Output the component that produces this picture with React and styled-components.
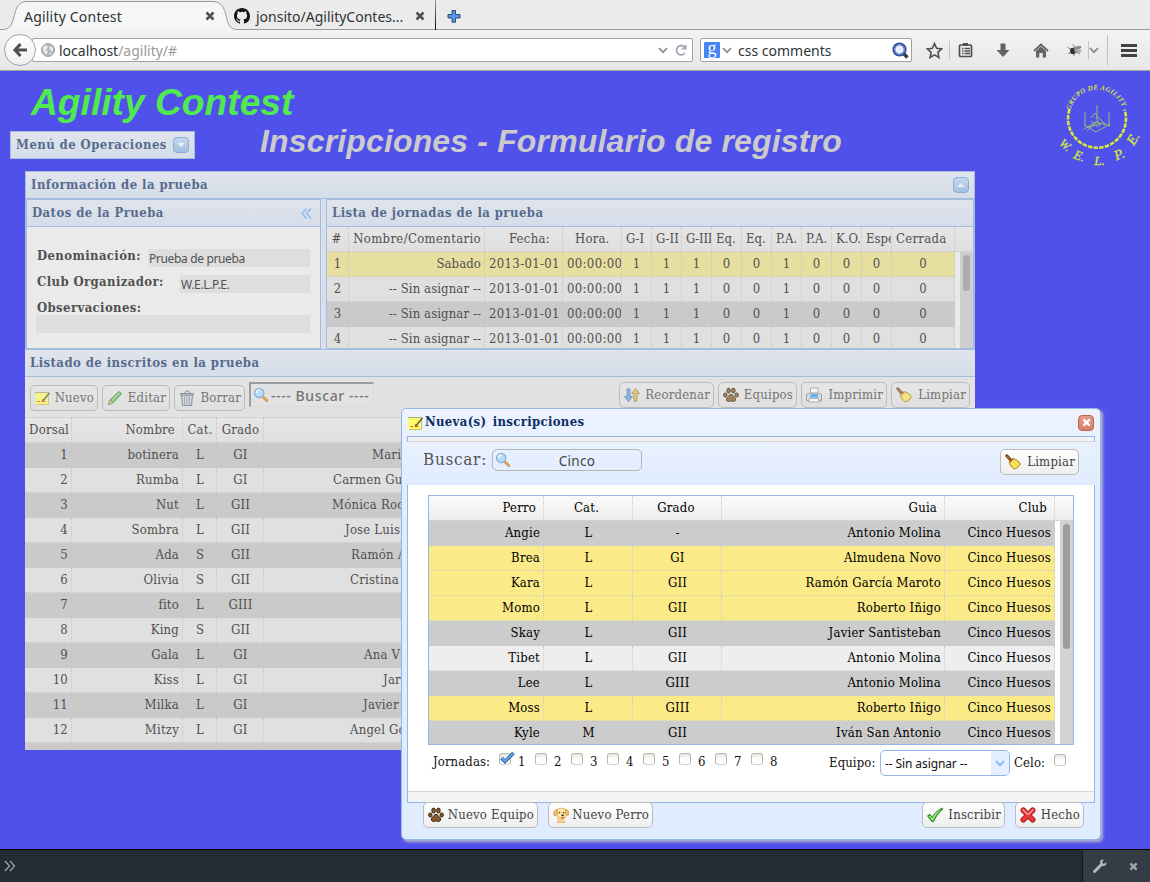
import React from 'react';
import styled, { createGlobalStyle, css } from 'styled-components';

const serif = '"DejaVu Serif Condensed", "DejaVu Serif", serif';
const sans = '"Noto Sans", "Open Sans", sans-serif';

const Global = createGlobalStyle`
  *, *::before, *::after { box-sizing: border-box; }
  body { margin: 0; background: #5050ea; overflow: hidden; }
  svg { display: block; flex: none; }
`;

/* ---------- icons ---------- */

const Icon = ({ size = 16, children, ...rest }) => (
  <svg width={size} height={size} viewBox="0 0 16 16" fill="none" {...rest}>{children}</svg>
);

const NoteIcon = () => (
  <Icon>
    <path d="M0.500 3h12v11H0.500z" fill="#fdfb62" />
    <path d="M0.500 2.500h13" stroke="#6d6420" strokeDasharray="1 1" />
    <path d="M1 14.500h12.500V5" stroke="#c9c45a" />
    <path d="M2.500 11.500h2.500M6.500 11.500h4" stroke="#e0532c" />
    <path d="M7 10l1.500 .3L14.500 3" stroke="#5c5540" strokeWidth="1.500" />
  </Icon>
);
const PencilIcon = () => (
  <Icon>
    <path d="M1.500 14.500l1.200-4.200L12 1.500l2.500 2.200-8.500 9z" fill="#55b849" stroke="#388232" />
    <path d="M5 10.500l7.500-7.500" stroke="#a5e48e" strokeWidth="1.300" />
    <path d="M1.500 14.500l1.200-4 3 2.300z" fill="#ecd3a2" stroke="#7b6b4a" strokeWidth=".6" />
  </Icon>
);
const TrashIcon = () => (
  <Icon>
    <path d="M2.500 5h11l-1 10.500h-9z" fill="#cdd5dd" stroke="#66727e" />
    <path d="M1.500 3.500h13V5h-13z" fill="#dfe5ea" stroke="#66727e" />
    <path d="M5.500 3L7 1h2.500L11 3" stroke="#66727e" />
    <path d="M5.500 6.500v8M8 6.500v8M10.500 6.500v8" stroke="#8894a0" />
  </Icon>
);
const LensIcon = () => (
  <Icon>
    <path d="M9.800 9.800l4 3.800" stroke="#d8863a" strokeWidth="2.600" strokeLinecap="round" />
    <path d="M9.800 9.800l3.800 3.600" stroke="#f7b868" strokeWidth="1" />
    <circle cx="6.200" cy="6" r="4.600" fill="#b5dcfa" stroke="#8fb3d6" strokeWidth="1.500" />
    <path d="M3.500 6a3 3 0 0 1 3-3" stroke="#eef8ff" strokeWidth="1.600" />
  </Icon>
);
const SortIcon = () => (
  <Icon>
    <path d="M3 2h3v7.500h2.500L4.500 14.500.5 9.500H3z" fill="#6fa8da" stroke="#44729f" strokeWidth=".9" />
    <path d="M10 14h3V6.500h2.300L11.500 1.500 7.800 6.500H10z" fill="#e6bd5e" stroke="#9b7a2d" strokeWidth=".9" />
  </Icon>
);
const PawIcon = () => (
  <Icon>
    <g fill="#8b5a2b" stroke="#3a2412" strokeWidth="1">
      <ellipse cx="2.300" cy="8" rx="1.700" ry="2.100" />
      <ellipse cx="5.600" cy="3.600" rx="1.800" ry="2.500" />
      <ellipse cx="10.400" cy="3.600" rx="1.800" ry="2.500" />
      <ellipse cx="13.700" cy="8" rx="1.700" ry="2.100" />
      <path d="M8 7.500c2 0 2.500 1.800 3.800 3 1.500 1.500.7 4-1.300 4-1 0-1.500-.6-2.500-.6s-1.500.6-2.500.6c-2 0-2.800-2.500-1.300-4C5.500 9.300 6 7.500 8 7.500z" />
    </g>
  </Icon>
);
const PrinterIcon = () => (
  <Icon>
    <path d="M4.500 1h7.500v6h-7.500z" fill="#fff" stroke="#8b98a8" />
    <path d="M3.500 6h9l3 1.500v6H.5v-6z" fill="#d8dbe0" stroke="#7e848e" />
    <path d="M4.500 7h7.500v3.500H4z" fill="#3b9ae8" />
    <path d="M3.500 11.500h9l1 3.500h-11z" fill="#fafafa" stroke="#989da6" />
  </Icon>
);
const BroomIcon = () => (
  <Icon>
    <path d="M1.800 1.800l3.200 3.500" stroke="#6e3d14" strokeWidth="3" strokeLinecap="round" />
    <path d="M1.800 1.800l3 3.200" stroke="#b27130" strokeWidth="1.200" />
    <path d="M7.500 4.500c2.300.4 5.800 1.700 8 5.500-1 2-3.500 4.600-6 5-3-1.500-5-4.600-5.300-7z" fill="#f3dc48" stroke="#a5861c" />
    <path d="M7 8.500l3.200 4M9.200 7l3.800 3.500" stroke="#fff7a6" />
    <path d="M5 8.300l3.300-3.500" stroke="#c1272d" strokeWidth="1" />
  </Icon>
);
const DogIcon = () => (
  <Icon>
    <path d="M4 9h8v6.500H4z" fill="#f8d3a4" />
    <path d="M4.500 2.500C6 .8 11 .8 12.500 2.500l1 5-2.500 4.300H6.500L4 7.500z" fill="#ffe7a6" stroke="#d9a348" strokeWidth=".8" />
    <path d="M4.500 2.500C2 2 .2 4.500 1 8.500 2.500 9 4 8 4.700 6zM12.500 2.500c2.500-.5 3.800 2 3 5.500-1.500.8-2.500 0-3-1z" fill="#f0bb62" stroke="#c99243" strokeWidth=".7" />
    <path d="M6 5h1.300v1.300H6zM10 5h1.300v1.300H10zM8.500 7.500h2.200V9H8.500z" fill="#302218" />
    <path d="M8 10.500h3" stroke="#e0662f" strokeWidth="1.200" />
    <path d="M4 15.300h8.500" stroke="#edb17c" />
  </Icon>
);
const OkIcon = () => (
  <Icon>
    <path d="M.8 9l2-1.500 2.500 3.300C7.500 6.500 10.500 3.500 15 1.200l.6.6C11.500 5.500 8.500 9.500 6.500 14.500H5z" fill="#7ed957" stroke="#2c8a2a" strokeWidth="1.100" />
    <path d="M2.500 9l3 3.500C7.500 8 10 5.200 12.500 3.500" stroke="#c9f7a2" />
  </Icon>
);
const NoIcon = () => (
  <Icon>
    <path d="M3.300 3.300l9.400 9.400M12.700 3.300l-9.400 9.400" stroke="#a81818" strokeWidth="5.600" strokeLinecap="round" />
    <path d="M3.300 3.300l9.400 9.400M12.700 3.300l-9.400 9.400" stroke="#e53838" strokeWidth="4" strokeLinecap="round" />
    <path d="M3 2.800l4.500 4.500M13 2.800L8.500 7.300" stroke="#f9a3a0" strokeWidth="1.300" strokeLinecap="round" />
  </Icon>
);
const CloseIcon = ({ color = '#4e5252', size = 10 }) => (
  <svg width={size} height={size} viewBox="0 0 10 10"><path d="M1.500 1.500l7 7M8.500 1.500l-7 7" stroke={color} strokeWidth="2.500" /></svg>
);
const Chevron = ({ color = '#888', w = 10 }) => (
  <svg width={w} height="7" viewBox="0 0 10 7"><path d="M1 1l4 4.300L9 1" fill="none" stroke={color} strokeWidth="1.800" /></svg>
);

/* ---------- browser chrome ---------- */

const TabBar = styled.div`
  height: 30px;
  background: #ebebeb;
  position: relative;
`;
const TabShape = styled.svg`
  position: absolute;
  left: 0;
  top: 0;
`;
const Tabs = styled.div`
  position: relative;
  display: flex;
  align-items: center;
  height: 32px;
  padding-left: 24px;
  font: 14px ${sans};
  color: #2e3436;
`;
const TabLabel = styled.span`
  flex: none;
  width: ${(p) => p.$w}px;
  letter-spacing: ${(p) => p.$ls || 0}px;
  white-space: nowrap;
  padding-top: 1px;
`;
const TabDivider = styled.div`
  width: 1px;
  height: 30px;
  margin: -2px 11px 0 10px;
  background: linear-gradient(#999, #000);
`;
const NavBar = styled.div`
  height: 41px;
  display: flex;
  align-items: center;
  padding: 0 0 0 4px;
  background: linear-gradient(#f3f3f3, #e7e7e7);
  border-bottom: 1px solid #a0a09c;
`;
const BackButton = styled.div`
  flex: none;
  width: 32px;
  height: 32px;
  border-radius: 50%;
  border: 1px solid #9aa3b0;
  background: linear-gradient(#fff, #f0f0f0);
  display: grid;
  place-items: center;
  z-index: 1;
`;
const Field = styled.div`
  flex: none;
  height: 24px;
  display: flex;
  align-items: center;
  width: ${(p) => p.$w}px;
  margin-left: ${(p) => p.$ml}px;
  padding: 0 ${(p) => p.$pr || 3}px 0 ${(p) => p.$pl}px;
  background: #fff;
  border: 1px solid #a1a1a1;
  border-radius: 2px;
  font: 14px ${sans};
  color: #2e3436;
`;
const Url = styled.span`
  flex: 1;
  margin-left: ${(p) => p.$ml || 4}px;
  padding-top: 1px;
  letter-spacing: ${(p) => p.$ls || 0}px;
  i { font-style: normal; color: #999; }
`;
const Reload = styled.div`
  margin-left: 6px;
`;
const GBadge = styled.span`
  width: 16px;
  height: 16px;
  margin-right: 2px;
  background: #4484f3;
  border-radius: 1px;
  color: #fff;
  font: 18px/12px "Liberation Serif", serif;
  text-align: center;
`;
const NavIcon = styled.div`
  flex: none;
  width: ${(p) => p.$w}px;
  padding-left: ${(p) => p.$pl || 0}px;
  display: grid;
  place-items: center;
`;
const NavSep = styled.div`
  flex: none;
  width: 1px;
  height: ${(p) => p.$h}px;
  background: #c2c2c6;
`;

/* ---------- page ---------- */

const Page = styled.div`
  height: 778px;
  background: #5050ea;
  overflow: hidden;
`;
const PageHead = styled.div`
  display: flex;
  justify-content: space-between;
  height: 100px;
  padding: 0 8px 0 10px;
`;
const Brand = styled.h1`
  margin: 0 0 0 21px;
  padding-top: 10px;
  height: 60px;
  font: italic bold 37.200px/43px "Liberation Sans", Arial, sans-serif;
  color: #50ea50;
  white-space: nowrap;
`;
const HeadRow = styled.div`
  display: flex;
`;
const Subtitle = styled.h2`
  margin: -9px 0 0 65px;
  font: italic bold 32px/38px "Liberation Sans", Arial, sans-serif;
  letter-spacing: 0.15px;
  color: #cbcbcb;
  white-space: nowrap;
`;
const PanelHead = styled.div`
  display: flex;
  align-items: center;
  justify-content: space-between;
  height: ${(p) => p.$h || 27}px;
  padding: 0 5px;
  background: linear-gradient(#e0e4ec, #d5dde9);
  font: bold 13px/16px ${serif};
  letter-spacing: 0.430px;
  color: #576b8e;
  white-space: nowrap;
  ${(p) => p.$line && css`border-bottom: 1px solid #a5bddd;`}
`;
const MenuBox = styled.div`
  width: 185px;
  height: 28px;
  border: 1px solid #a5bddd;
`;
const ToolBtn = styled.div`
  width: 16px;
  height: 16px;
  border: 1px solid #8daed4;
  border-radius: 4px;
  background: linear-gradient(#c6d8ee, #a4bfe2);
  display: grid;
  place-items: center;
`;
const Main = styled.div`
  width: 950px;
  height: 579px;
  margin-left: 25px;
  background: #e2e2e2;
  overflow: hidden;
`;
const Info = styled.div`
  height: 179px;
  border: 1px solid #a5bddd;
  background: #d9dfe9;
`;
const Split = styled.div`
  display: flex;
  justify-content: space-between;
  height: 151px;
  border-top: 1px solid #a5bddd;
`;
const Pane = styled.div`
  width: ${(p) => p.$w}px;
  height: 150px;
  border: 1px solid #a5bddd;
  background: #eaeaea;
  overflow: hidden;
`;
const Form = styled.div`
  padding: 22px 10px 0 9px;
  font: bold 13px/18px ${serif};
  letter-spacing: 0.380px;
  color: #515151;
`;
const FormRow = styled.div`
  display: flex;
  align-items: flex-end;
  justify-content: space-between;
  height: 18px;
  margin-bottom: ${(p) => p.$mb ?? 8}px;
  padding-left: 1px;
  > span { padding-bottom: 2px; }
`;
const Value = styled.div`
  width: ${(p) => p.$w}px;
  height: 18px;
  background: #dedede;
  padding: 2px 1px 0;
  font: 12px/16px ${sans};
  letter-spacing: -0.350px;
  color: #515151;
`;

/* ---------- grids ---------- */

const Grid = styled.div`
  font: 13px/24px ${serif};
  color: ${(p) => (p.$dim ? '#505050' : '#000')};
  --dot: ${(p) => (p.$dim ? '#c6c6c6' : '#ccc')};
  height: ${(p) => p.$h}px;
  overflow: hidden;
`;
const Line = styled.div`
  display: flex;
  height: 25px;
  width: ${(p) => (p.$w ? p.$w + 'px' : 'auto')};
  background: ${(p) => p.$bg};
  border-bottom: 1px ${(p) => (p.$head ? 'solid #d2d2d2' : 'dotted var(--dot)')};
`;
const Cell = styled.div`
  flex: none;
  width: ${(p) => p.$w}px;
  padding: 0 ${(p) => p.$pr ?? 3}px 0 ${(p) => p.$pl ?? 4}px;
  text-align: ${(p) => p.$al || 'right'};
  letter-spacing: ${(p) => p.$ls ?? 0.2}px;
  border-right: ${(p) => (p.$last ? 'none' : '1px dotted var(--dot)')};
  white-space: nowrap;
  overflow: hidden;
`;
const GridBody = styled.div`
  display: flex;
  justify-content: space-between;
  background: ${(p) => p.$bg};
`;
const Track = styled.div`
  width: 13px;
  padding: 3px 0 0 3px;
  background: ${(p) => p.$bg};
`;
const Thumb = styled.div`
  width: 7px;
  height: ${(p) => p.$h}px;
  border-radius: 4px;
  background: ${(p) => p.$bg};
`;

const Toolbar = styled.div`
  display: flex;
  align-items: flex-start;
  gap: 4px;
  height: 41px;
  padding: 5px 5px 0;
  background: #e2e2e2;
  border-bottom: 1px solid #d2d2d2;
`;
const Button = styled.div`
  display: flex;
  align-items: center;
  justify-content: space-between;
  flex: none;
  width: ${(p) => p.$w}px;
  height: 26px;
  margin: ${(p) => p.$m || 0};
  padding: 0 3px 0 4px;
  border: 1px solid ${(p) => (p.$dim ? '#bdbdbd' : '#bbb')};
  border-radius: 5px;
  background: ${(p) => (p.$dim ? 'linear-gradient(#e6e6e6, #dfdfdf)' : 'linear-gradient(#fff, #eee)')};
  font: 13px/22px ${serif};
  letter-spacing: 0.200px;
  color: ${(p) => (p.$dim ? '#747474' : '#444')};
  white-space: nowrap;
  svg { opacity: ${(p) => (p.$dim ? 0.72 : 1)}; }
`;
const SearchBox = styled.div`
  display: flex;
  width: 125px;
  height: 25px;
  padding: 3px 0 0 2px;
  gap: 2px;
  border: 1px solid #dadada;
  border-top: 2px solid #9c9c9c;
  border-left: 2px solid #9c9c9c;
  font: 500 14px/17px ${sans};
  color: #747474;
  white-space: nowrap;
  letter-spacing: 0.600px;
`;

/* ---------- dialog ---------- */

const Dialog = styled.div`
  position: absolute;
  left: 401px;
  top: 408px;
  width: 700px;
  height: 432px;
  padding: 0 5px;
  border: 1px solid #92b7e8;
  border-radius: 5px;
  background: linear-gradient(#edf3ff, #e0ecff 80px);
  box-shadow: 2px 2px 3px #b4b4cc;
`;
const DialogHead = styled.div`
  display: flex;
  align-items: center;
  height: 27px;
  padding: 0 1px 0 1px;
  font: bold 13px/20px ${serif};
  color: #0e2d5f;
  span { flex: 1; padding: 0 0 2px 1px; white-space: nowrap; letter-spacing: 0.330px; word-spacing: 2px; }
`;
const CloseBtn = styled.div`
  width: 16px;
  height: 16px;
  border: 1px solid #bd6250;
  border-radius: 4px;
  background: linear-gradient(#e89a84, #d3806a);
  display: grid;
  place-items: center;
`;
const Strip = styled.div`
  height: 6px;
  border: 1px solid #92b7e8;
  border-bottom-color: #d6d6d6;
  background: #f3f3f3;
`;
const DialogTools = styled.div`
  display: flex;
  align-items: flex-start;
  justify-content: space-between;
  height: 43px;
  padding: 7px 16px 0;
  background: linear-gradient(#e9f1ff, #e0ecff);
`;
const SearchLabel = styled.label`
  display: flex;
  font: 17px/20px ${serif};
  letter-spacing: 0.700px;
  color: #555;
`;
const RoundInput = styled.div`
  display: flex;
  width: 150px;
  height: 22px;
  margin-left: 5px;
  padding: 2px 0 0 2px;
  border: 1px solid #b5b5b5;
  border-radius: 5px;
  font: 13.500px/19px ${sans};
  letter-spacing: 0.300px;
  color: #444;
  span { flex: 1; text-align: center; padding-left: 2px; }
`;
const DialogBody = styled.div`
  height: 318px;
  padding: 10px 20px 0;
  border: 1px solid #92b7e8;
  border-top: none;
  background: linear-gradient(#fff 306px, #d6d6d6 306px, #d6d6d6 307px, #f3f3f3 307px);
`;
const GridFrame = styled.div`
  width: 646px;
  height: 250px;
  border: 1px solid #92b7e8;
`;
const Options = styled.div`
  display: flex;
  padding-left: 5px;
  height: 40px;
  font: 13px/18px ${serif};
  color: #111;
  white-space: nowrap;
`;
const OptLabel = styled.span`
  width: ${(p) => p.$w}px;
  padding-top: ${(p) => p.$pt || 8}px;
  letter-spacing: 0.100px;
`;
const Day = styled.span`
  display: flex;
  width: 36px;
  gap: 7px;
  padding-top: 7px;
`;
const DayNumber = styled.span`
  padding-top: 1px;
`;
const Check = styled.span`
  position: relative;
  flex: none;
  width: 12px;
  height: 12px;
  margin-top: ${(p) => p.$mt || 1}px;
  border: 1px solid #b9b9b0;
  border-bottom-color: #d5d5cc;
  border-radius: 3px;
  background: linear-gradient(#e6e6e0, #fff 60%);
  svg { position: absolute; left: 0; top: -2px; }
`;
const Combo = styled.div`
  display: flex;
  justify-content: space-between;
  width: 130px;
  height: 26px;
  margin: 5px 4px 0 5px;
  padding-left: 4px;
  border: 1px solid #92b7e8;
  border-radius: 5px;
  overflow: hidden;
  font: 12px/26px ${sans};
  letter-spacing: -0.100px;
`;
const ComboArrow = styled.div`
  width: 18px;
  background: #e4efff;
  display: grid;
  place-items: center;
`;
const DialogFoot = styled.div`
  display: flex;
  padding: 0 11px 0 16px;
`;
const Spacer = styled.div`
  flex: 1;
`;

const DevBar = styled.div`
  display: flex;
  justify-content: space-between;
  height: 33px;
  border-top: 1px solid #000;
  background: #232b33;
  padding-left: 4px;
  align-items: center;
`;
const DevTools = styled.div`
  display: flex;
  align-items: center;
  gap: 21px;
  width: 68px;
  height: 32px;
  padding-left: 9px;
  background: #343c45;
  border-left: 1px solid #12181d;
`;

/* ---------- data ---------- */

const dayCols = [
  { w: 22, h: '#' }, { w: 136, h: 'Nombre/Comentario' }, { w: 78, h: 'Fecha:' },
  { w: 59, h: 'Hora.' }, { w: 30, h: 'G-I' }, { w: 30, h: 'G-II' }, { w: 30, h: 'G-III' }, { w: 30, h: 'Eq.' },
  { w: 30, h: 'Eq.' }, { w: 30, h: 'P.A.' }, { w: 30, h: 'P.A.' }, { w: 30, h: 'K.O.' }, { w: 30, h: 'Espe' }, { w: 63, h: 'Cerrada' },
];
const dayHeadStyle = (i) => {
  if (i === 0) return { $al: 'center', $pl: 1 };
  if (i === 1) return { $ls: 0.35 };
  if (i === 2) return { $pr: 12, $ls: 0.3 };
  if (i === 3) return { $al: 'left', $pl: 12 };
  if (i === 13) return { $al: 'left', $ls: 0.3, $pr: 0 };
  return { $al: 'left', $pr: 0, $ls: i === 6 ? -0.25 : 0 };
};
const dayValues = ['1', '1', '1', '0', '0', '1', '0', '0', '0', '0'];
const days = ['Sabado', '-- Sin asignar --', '-- Sin asignar --', '-- Sin asignar --'];
const dayBg = ['#e7dfa0', '#e0e0e0', '#cacaca', '#e0e0e0'];

const entries = [
  ['1', 'botinera', 'L', 'GI', 'Mari', 108], ['2', 'Rumba', 'L', 'GI', 'Carmen Gu', 69], ['3', 'Nut', 'L', 'GII', 'Mónica Roc', 68],
  ['4', 'Sombra', 'L', 'GII', 'Jose Luis', 81], ['5', 'Ada', 'S', 'GII', 'Ramón A', 87], ['6', 'Olivia', 'S', 'GII', 'Cristina', 86],
  ['7', 'fito', 'L', 'GIII', '', 0], ['8', 'King', 'S', 'GII', '', 0], ['9', 'Gala', 'L', 'GI', 'Ana V', 100],
  ['10', 'Kiss', 'L', 'GI', 'Jar', 119], ['11', 'Milka', 'L', 'GI', 'Javier', 99], ['12', 'Mitzy', 'L', 'GI', 'Angel Go', 86],
  ['', '', '', '', '', 0],
];

const Y = '#fbea88';
const dogs = [
  ['Angie', 'L', '-', 'Antonio Molina', '#ccc'], ['Brea', 'L', 'GI', 'Almudena Novo', Y], ['Kara', 'L', 'GII', 'Ramón García Maroto', Y],
  ['Momo', 'L', 'GII', 'Roberto Iñigo', Y], ['Skay', 'L', 'GII', 'Javier Santisteban', '#ccc'], ['Tibet', 'L', 'GII', 'Antonio Molina', '#eee'],
  ['Lee', 'L', 'GIII', 'Antonio Molina', '#ccc'], ['Moss', 'L', 'GIII', 'Roberto Iñigo', Y], ['Kyle', 'M', 'GII', 'Iván San Antonio', '#ccc'],
];

/* ---------- sections ---------- */

const Browser = () => (
  <>
    <TabBar>
      <TabShape width="1150" height="30">
        <path d="M0 29.500H3C19 29.500 9 1.500 27 1.500H212C232 1.500 221 29.500 237 29.500H1150V31H0z" fill="#f6f6f6" stroke="#9b9b9b" />
      </TabShape>
      <Tabs>
        <TabLabel $w={181} $ls={0.2}>Agility Contest</TabLabel>
        <CloseIcon />
        <NavIcon $w={41} $pl={13}>
          <svg width="16" height="16" viewBox="0 0 16 16"><path fill="#161514" d="M8 0C3.580 0 0 3.580 0 8c0 3.540 2.290 6.530 5.470 7.590.4.070.55-.17.55-.38 0-.19-.01-.82-.01-1.490-2.010.37-2.530-.49-2.690-.94-.09-.23-.48-.94-.82-1.130-.28-.15-.68-.52-.01-.53.63-.01 1.080.58 1.230.82.72 1.210 1.870.87 2.330.66.07-.52.28-.87.51-1.070-1.780-.2-3.640-.89-3.640-3.950 0-.87.31-1.590.82-2.150-.08-.2-.36-1.020.08-2.120 0 0 .67-.21 2.200.82a7.600 7.600 0 0 1 4 0c1.530-1.040 2.200-.82 2.200-.82.44 1.100.16 1.920.08 2.120.51.56.82 1.270.82 2.150 0 3.070-1.870 3.750-3.650 3.950.29.25.54.73.54 1.480 0 1.070-.01 1.930-.01 2.200 0 .21.15.46.55.38A8.010 8.010 0 0 0 16 8c0-4.420-3.580-8-8-8z" /></svg>
        </NavIcon>
        <TabLabel $w={159}>jonsito/AgilityContes...</TabLabel>
        <CloseIcon />
        <TabDivider />
        <svg width="14" height="14" viewBox="0 0 14 14"><path d="M5 1.500h3.500v4H13V9H8.500v4.200H5V9H1V5.500h4z" fill="#5c93da" stroke="#244f93" /></svg>
      </Tabs>
    </TabBar>
    <NavBar>
      <BackButton>
        <svg width="16" height="16" viewBox="0 0 16 16"><path d="M8.500 2L3 8l5.500 6M3 8h12" fill="none" stroke="#4d4f50" strokeWidth="3" /></svg>
      </BackButton>
      <Field $w={661} $ml={-4} $pl={8} $pr={4}>
        <svg width="14" height="14" viewBox="0 0 14 14"><circle cx="7" cy="7" r="6.500" fill="#b4b4b4" stroke="#a5a5a5" /><path d="M2 4l3-2 2 2-2 3 2 2-2 3-3-5zM9 3l3 2v4l-3-2-1-2zM8 10l3 0-2 2z" fill="#ececec" /></svg>
        <Url>localhost<i>/agility/#</i></Url>
        <Chevron w={10} />
        <Reload>
          <svg width="14" height="14" viewBox="0 0 14 14"><path d="M11 10A4.700 4.700 0 1 1 10.500 3.800" fill="none" stroke="#a0a9b4" strokeWidth="1.800" /><path d="M12.500 1v5.500H7z" fill="#a0a9b4" /></svg>
        </Reload>
      </Field>
      <Field $w={212} $ml={7} $pl={3} $pr={2}>
        <GBadge>g</GBadge>
        <Chevron w={10} />
        <Url $ml={6}>css comments</Url>
        <svg width="17" height="17" viewBox="0 0 17 17"><path d="M11 11l4.500 4.500" stroke="#3c3c40" strokeWidth="3.300" /><circle cx="7.500" cy="7.500" r="5.700" fill="#e6efff" stroke="#2a4896" strokeWidth="2.800" /><circle cx="7.500" cy="7.500" r="5.200" fill="none" stroke="#90a8de" strokeWidth=".8" /></svg>
      </Field>
      <NavIcon $w={37} $pl={7}>
        <svg width="17" height="17" viewBox="0 0 17 17"><path d="M8.500 1.500l2.100 4.800 5 .6-3.700 3.500 1 5.100-4.400-2.600-4.400 2.600 1-5.100L1.400 6.900l5-.6z" fill="none" stroke="#4d4f50" strokeWidth="1.600" /></svg>
      </NavIcon>
      <NavSep $h={18} />
      <NavIcon $w={30}>
        <svg width="15" height="16" viewBox="0 0 15 16"><rect x="1.500" y="3" width="12" height="11.500" rx="1" fill="none" stroke="#4d4f50" strokeWidth="1.700" /><path d="M5 1h5v3H5z" fill="#4d4f50" /><path d="M4 6.500h1.500M6.500 6.500H12M4 9h1.500M6.500 9H12M4 11.500h1.500M6.500 11.500H12" stroke="#4d4f50" strokeWidth="1.300" /></svg>
      </NavIcon>
      <NavIcon $w={46}>
        <svg width="14" height="15" viewBox="0 0 14 15"><path d="M4.500 0.500h5v6.500H13.500L7 14 .5 7h4z" fill="#616464" /></svg>
      </NavIcon>
      <NavIcon $w={30}>
        <svg width="16" height="15" viewBox="0 0 16 15"><path d="M1 8l7-6.500L15 8" fill="none" stroke="#616464" strokeWidth="1.800" /><path d="M3 8l5-4.600L13 8v6.500H9.700V10H6.300v4.500H3z" fill="#616464" /></svg>
      </NavIcon>
      <NavIcon $w={32} $pl={6}>
        <svg width="16" height="12" viewBox="0 0 16 12"><ellipse cx="6" cy="7" rx="3" ry="3.200" fill="#333" /><ellipse cx="10.500" cy="4" rx="4" ry="1.700" transform="rotate(-15 10 4)" fill="#8a8a8a" /><ellipse cx="11" cy="7" rx="3.500" ry="1.700" fill="#a8a8a8" /><path d="M4 5L.5 3.500M4 8l-3 2M7 9v3M8 4L6 .5M9 8l4 2" stroke="#666" strokeWidth=".8" /></svg>
      </NavIcon>
      <NavSep $h={18} />
      <Chevron w={10} />
      <NavIcon $w={16}><NavSep $h={30} /></NavIcon>
      <NavIcon $w={28}>
        <svg width="16" height="13" viewBox="0 0 16 13"><path d="M0 1.500h16M0 6.500h16M0 11.500h16" stroke="#3f4344" strokeWidth="2.800" /></svg>
      </NavIcon>
    </NavBar>
  </>
);

const ClubLogo = () => (
  <svg width="84" height="100" viewBox="1058 71 84 100" overflow="visible" fill="#d6e838" fontFamily='"Liberation Serif", serif' fontStyle="italic" fontWeight="bold">
    <path id="ringTop" d="M1070.300 110.500A27.500 27.500 0 0 1 1123.700 110.500" fill="none" />
    <text fontSize="7"><textPath href="#ringTop" textLength="69">GRUPO DE AGILITY</textPath></text>
    <path d="M1069.500 109.500A29 29 0 1 0 1124.500 109.500" fill="none" stroke="#d6e838" strokeWidth="2.600" strokeDasharray="4.500 1.200" />
    <path d="M1085 112v14M1097 105v14M1109 112v14M1084 125l12 7 14-8M1084 129l12-7 14 4M1087 131l10-10M1091 118l4-5 3 4 8 8M1091 121l7 6M1096 117l4 9M1089 127l14-4" fill="none" stroke="#98b878" strokeWidth="1" />
    <g textAnchor="middle" fontWeight="normal" stroke="#d6e838" strokeWidth=".3">
      <text transform="translate(1063 148) rotate(40)" fontSize="12">W.</text>
      <text transform="translate(1078 160) rotate(20)" fontSize="13">E.</text>
      <text transform="translate(1099.500 165)" fontSize="13">L.</text>
      <text transform="translate(1121 158.500) rotate(-22)" fontSize="14">P.</text>
      <text transform="translate(1137 141) rotate(-58)" fontSize="14">E.</text>
    </g>
  </svg>
);

const JourneyGrid = () => (
  <Grid $dim $h={122}>
    <Line $head $bg="linear-gradient(#e6e6e6, #dfdfdf)">
      {dayCols.map((c, i) => <Cell key={i} $w={c.w} {...dayHeadStyle(i)}>{c.h}</Cell>)}
    </Line>
    <GridBody $bg="#eaeaea">
      <div>
        {days.map((d, r) => (
          <Line key={r} $w={628} $bg={dayBg[r]}>
            {[String(r + 1), d, '2013-01-01', '00:00:00', ...dayValues].map((v, i) => (
              <Cell key={i} $w={dayCols[i].w} $al={i === 1 ? 'right' : i === 2 || i === 3 ? 'left' : 'center'}
                $pr={i === 3 || i === 2 ? 0 : i === 1 ? 3 : 4} $ls={i === 2 || i === 3 ? 0.35 : 0.1}>{v}</Cell>
            ))}
          </Line>
        ))}
      </div>
      <Track $bg="#cfcfcf"><Thumb $h={36} $bg="#acacae" /></Track>
    </GridBody>
  </Grid>
);

const InscritosGrid = () => (
  <Grid $dim $h={333}>
    <Line $head $bg="linear-gradient(#e6e6e6, #dfdfdf)">
      <Cell $w={47} $pr={2}>Dorsal</Cell><Cell $w={111} $pr={7}>Nombre</Cell><Cell $w={34} $al="center">Cat.</Cell><Cell $w={47} $al="center">Grado</Cell>
    </Line>
    {entries.map(([n, name, cat, g, guide, pad], i) => (
      <Line key={i} $bg={i % 2 ? '#e0e0e0' : '#cacaca'}>
        <Cell $w={47}>{n}</Cell><Cell $w={111}>{name}</Cell><Cell $w={34} $al="center">{cat}</Cell><Cell $w={47} $al="center">{g}</Cell>
        <Cell $w={200} $al="left" $pl={pad} $last>{guide}</Cell>
      </Line>
    ))}
  </Grid>
);

const NewDialog = () => (
  <Dialog>
    <DialogHead>
      <NoteIcon /><span>Nueva(s) inscripciones</span>
      <CloseBtn><CloseIcon color="#fff" size={9} /></CloseBtn>
    </DialogHead>
    <Strip />
    <DialogTools>
      <SearchLabel>Buscar:<RoundInput><LensIcon /><span>Cinco</span></RoundInput></SearchLabel>
      <Button $w={79}><BroomIcon />Limpiar</Button>
    </DialogTools>
    <DialogBody>
      <GridFrame>
        <Grid $h={248}>
          <Line $head $bg="linear-gradient(#fafafa, #ededed)">
            <Cell $w={115} $pr={7}>Perro</Cell><Cell $w={89} $al="center" $pr={7}>Cat.</Cell><Cell $w={89} $al="center" $pr={6}>Grado</Cell>
            <Cell $w={223} $pr={7}>Guia</Cell><Cell $w={110} $pr={7}>Club</Cell>
          </Line>
          <GridBody $bg="#fff">
            <div>
              {dogs.map(([name, cat, g, guide, bg]) => (
                <Line key={name} $w={626} $bg={bg}>
                  <Cell $w={115}>{name}</Cell><Cell $w={89} $al="center">{cat}</Cell><Cell $w={89} $al="center">{g}</Cell>
                  <Cell $w={223}>{guide}</Cell><Cell $w={110}>Cinco Huesos</Cell>
                </Line>
              ))}
            </div>
            <Track $bg="#d3d3d3"><Thumb $h={125} $bg="#9c9c9e" /></Track>
          </GridBody>
        </Grid>
      </GridFrame>
      <Options>
        <OptLabel $w={66}>Jornadas:</OptLabel>
        {[1, 2, 3, 4, 5, 6, 7, 8].map((n) => (
          <Day key={n}>
            <Check>{n === 1 && <svg width="15" height="12" viewBox="0 0 15 12"><path d="M1.500 6l3.500 3.500L13.500 1" fill="none" stroke="#2f67a8" strokeWidth="3.600" /><path d="M1.800 6l3.200 3.200L13 1.300" fill="none" stroke="#6aa5e2" strokeWidth="1.800" /></svg>}</Check>
            <DayNumber>{n}</DayNumber>
          </Day>
        ))}
        <Spacer />
        <OptLabel $pt={9} $w={46}>Equipo:</OptLabel>
        <Combo>-- Sin asignar --<ComboArrow><Chevron w={12} color="#74b4ee" /></ComboArrow></Combo>
        <OptLabel $pt={9} $w={40}>Celo:</OptLabel>
        <Check $mt={9} />
        <OptLabel $w={8} />
      </Options>
    </DialogBody>
    <DialogFoot>
      <Button $w={115} $m="-1px 10px 0 0"><PawIcon />Nuevo Equipo</Button>
      <Button $w={105} $m="-1px 0 0 0"><DogIcon />Nuevo Perro</Button>
      <Spacer />
      <Button $w={83} $m="-1px 10px 0 0"><OkIcon />Inscribir</Button>
      <Button $w={69} $m="-1px 0 0 0"><NoIcon />Hecho</Button>
    </DialogFoot>
  </Dialog>
);

export default function App() {
  return (
    <>
      <Global />
      <Browser />
      <Page>
        <PageHead>
          <div>
            <Brand>Agility Contest</Brand>
            <HeadRow>
              <MenuBox>
                <PanelHead $h={26}>Menú de Operaciones<ToolBtn><svg width="8" height="4" viewBox="0 0 8 4"><path d="M0 0h8L4 4z" fill="#eee" /></svg></ToolBtn></PanelHead>
              </MenuBox>
              <Subtitle>Inscripciones - Formulario de registro</Subtitle>
            </HeadRow>
          </div>
          <ClubLogo />
        </PageHead>
        <Main>
          <Info>
            <PanelHead $h={26}>Información de la prueba<ToolBtn><svg width="8" height="4" viewBox="0 0 8 4"><path d="M0 4h8L4 0z" fill="#eee" /></svg></ToolBtn></PanelHead>
            <Split>
              <Pane $w={295}>
                <PanelHead $line>Datos de la Prueba
                  <svg width="14" height="11" viewBox="0 0 14 11"><path d="M5.500 .5L1 5.500l4.500 5M10 .5L5.500 5.500l4.500 5" fill="none" stroke="#8cbcec" strokeWidth="1.400" /></svg>
                </PanelHead>
                <Form>
                  <FormRow><span>Denominación:</span><Value $w={162}>Prueba de prueba</Value></FormRow>
                  <FormRow><span>Club Organizador:</span><Value $w={130}>W.E.L.P.E.</Value></FormRow>
                  <FormRow $mb={-4}><span>Observaciones:</span></FormRow>
                  <Value $w={274} />
                </Form>
              </Pane>
              <Pane $w={648}>
                <PanelHead $line>Lista de jornadas de la prueba</PanelHead>
                <JourneyGrid />
              </Pane>
            </Split>
          </Info>
          <PanelHead $line>Listado de inscritos en la prueba</PanelHead>
          <Toolbar>
            <Button $dim $w={68} $m="3px 0 0"><NoteIcon />Nuevo</Button>
            <Button $dim $w={68} $m="3px 0 0"><PencilIcon />Editar</Button>
            <Button $dim $w={71} $m="3px 0 0"><TrashIcon />Borrar</Button>
            <SearchBox><LensIcon />---- Buscar ----</SearchBox>
            <Spacer />
            <Button $dim $w={95}><SortIcon />Reordenar</Button>
            <Button $dim $w={79}><PawIcon />Equipos</Button>
            <Button $dim $w={86}><PrinterIcon />Imprimir</Button>
            <Button $dim $w={79}><BroomIcon />Limpiar</Button>
          </Toolbar>
          <InscritosGrid />
        </Main>
      </Page>
      <DevBar>
        <svg width="12" height="12" viewBox="0 0 12 12"><path d="M1 1l4.500 5L1 11M6 1l4.500 5L6 11" fill="none" stroke="#9aa0a5" strokeWidth="1.400" /></svg>
        <DevTools>
          <Icon><path d="M2.500 13.500L9 7" stroke="#b5babf" strokeWidth="3" strokeLinecap="round" /><path d="M14.300 4.200l-2.500 1.700-1.700-1.700L11.800 1.700C9.500 1 7.500 3 8 5.200L10.800 8c2.200.5 4.200-1.500 3.500-3.800z" fill="#b5babf" /></Icon>
          <CloseIcon color="#a4a9ae" size={9} />
        </DevTools>
      </DevBar>
      <NewDialog />
    </>
  );
}
